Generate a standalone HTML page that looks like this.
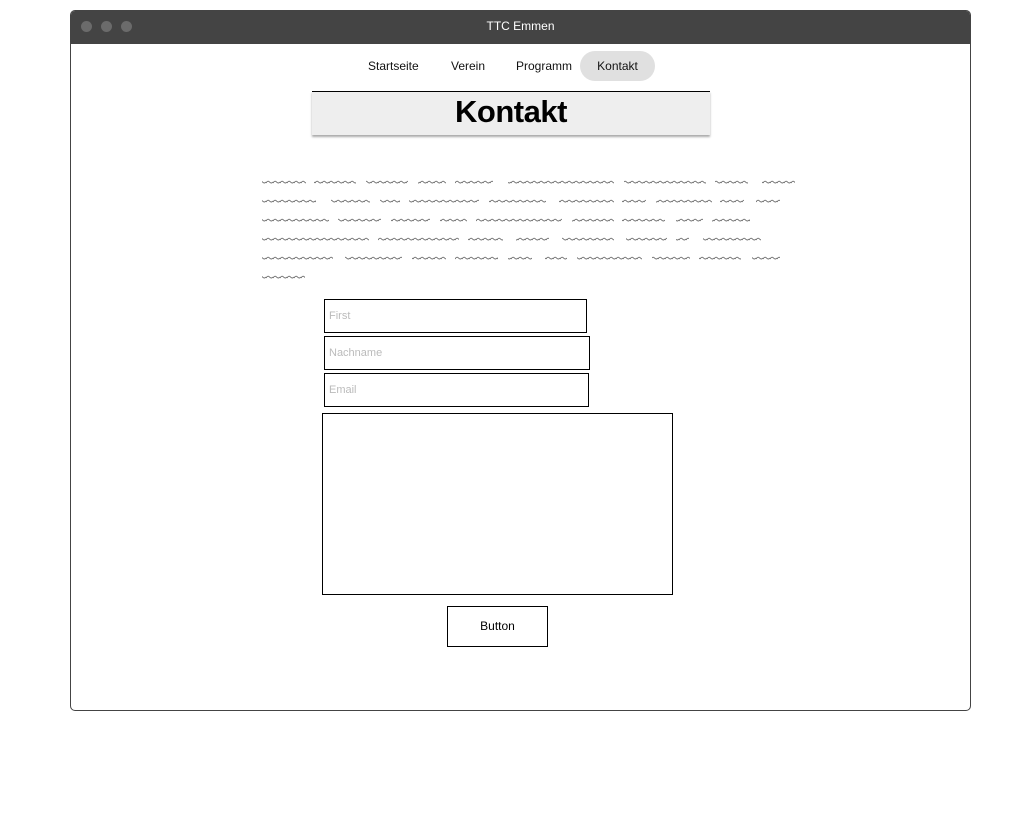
<!DOCTYPE html>
<html><head><meta charset="utf-8"><style>
*{margin:0;padding:0;box-sizing:border-box}
body{width:1021px;height:821px;background:#fff;position:relative;font-family:"Liberation Sans",sans-serif;overflow:hidden}
.win{position:absolute;left:70px;top:10px;width:901px;height:701px;border:1px solid #444;border-radius:5px;overflow:hidden;background:#fff}
.bar{position:absolute;left:0;top:0;width:100%;height:33px;background:#444;color:#fff;font-size:12px;text-align:center;line-height:31px}
.dot{position:absolute;top:10px;width:11px;height:11px;border-radius:50%;background:#6b6b6b}
.nav{position:absolute;top:51px;font-size:12px;color:#111;height:30px;line-height:30px}
.abs{position:absolute}
.inp{position:absolute;border:1px solid #000;background:#fff;font-size:11px;color:#bbb;padding-left:4px}
</style></head><body>
<div class="win">
<div class="bar">TTC Emmen
<div class="dot" style="left:10px"></div><div class="dot" style="left:30px"></div><div class="dot" style="left:50px"></div></div>
</div>
<div class="nav" style="left:368px">Startseite</div>
<div class="nav" style="left:451px">Verein</div>
<div class="nav" style="left:516px">Programm</div>
<div class="nav" style="left:580px;width:75px;background:#e0e0e0;border-radius:15px;text-align:center">Kontakt</div>
<div class="abs" style="left:312px;top:91px;width:398px;height:44px;background:#eee;border-top:1px solid #000;box-shadow:0 2px 2px #aaa;text-align:center;font-weight:bold;font-size:31px;line-height:40px;color:#000;letter-spacing:-0.5px">Kontakt</div>
<svg class="abs" style="left:0;top:0" width="1021" height="821">
<defs><pattern id="w" x="0" y="0" width="7" height="19" patternUnits="userSpaceOnUse"><path d="M0 12 Q1.75 9 3.5 11 T7 11" fill="none" stroke="#666" stroke-width="0.9"/></pattern></defs>
<g fill="url(#w)">
<rect x="262" y="179" width="44" height="6"/><rect x="314" y="179" width="42" height="6"/><rect x="366" y="179" width="42" height="6"/><rect x="418" y="179" width="28" height="6"/><rect x="455" y="179" width="38" height="6"/><rect x="508" y="179" width="106" height="6"/><rect x="624" y="179" width="82" height="6"/><rect x="715" y="179" width="33" height="6"/><rect x="762" y="179" width="33" height="6"/>
<rect x="262" y="198" width="54" height="6"/><rect x="331" y="198" width="39" height="6"/><rect x="380" y="198" width="20" height="6"/><rect x="409" y="198" width="70" height="6"/><rect x="489" y="198" width="57" height="6"/><rect x="559" y="198" width="55" height="6"/><rect x="622" y="198" width="24" height="6"/><rect x="656" y="198" width="56" height="6"/><rect x="720" y="198" width="24" height="6"/><rect x="756" y="198" width="24" height="6"/>
<rect x="262" y="217" width="67" height="6"/><rect x="338" y="217" width="43" height="6"/><rect x="391" y="217" width="39" height="6"/><rect x="440" y="217" width="27" height="6"/><rect x="476" y="217" width="86" height="6"/><rect x="572" y="217" width="42" height="6"/><rect x="622" y="217" width="43" height="6"/><rect x="676" y="217" width="27" height="6"/><rect x="712" y="217" width="38" height="6"/>
<rect x="262" y="236" width="107" height="6"/><rect x="378" y="236" width="81" height="6"/><rect x="468" y="236" width="35" height="6"/><rect x="516" y="236" width="33" height="6"/><rect x="562" y="236" width="52" height="6"/><rect x="626" y="236" width="41" height="6"/><rect x="676" y="236" width="13" height="6"/><rect x="703" y="236" width="58" height="6"/>
<rect x="262" y="255" width="71" height="6"/><rect x="345" y="255" width="57" height="6"/><rect x="412" y="255" width="34" height="6"/><rect x="455" y="255" width="43" height="6"/><rect x="508" y="255" width="24" height="6"/><rect x="545" y="255" width="22" height="6"/><rect x="577" y="255" width="65" height="6"/><rect x="652" y="255" width="38" height="6"/><rect x="699" y="255" width="42" height="6"/><rect x="752" y="255" width="28" height="6"/>
<rect x="262" y="274" width="43" height="6"/>
</g></svg>
<div class="inp" style="left:324px;top:299px;width:263px;height:34px;line-height:32px">First</div>
<div class="inp" style="left:324px;top:336px;width:266px;height:34px;line-height:32px">Nachname</div>
<div class="inp" style="left:324px;top:373px;width:265px;height:34px;line-height:32px">Email</div>
<div class="inp" style="left:322px;top:413px;width:351px;height:182px"></div>
<div class="abs" style="left:447px;top:606px;width:101px;height:41px;border:1px solid #000;font-size:12px;text-align:center;line-height:39px;color:#000">Button</div>
</body></html>
